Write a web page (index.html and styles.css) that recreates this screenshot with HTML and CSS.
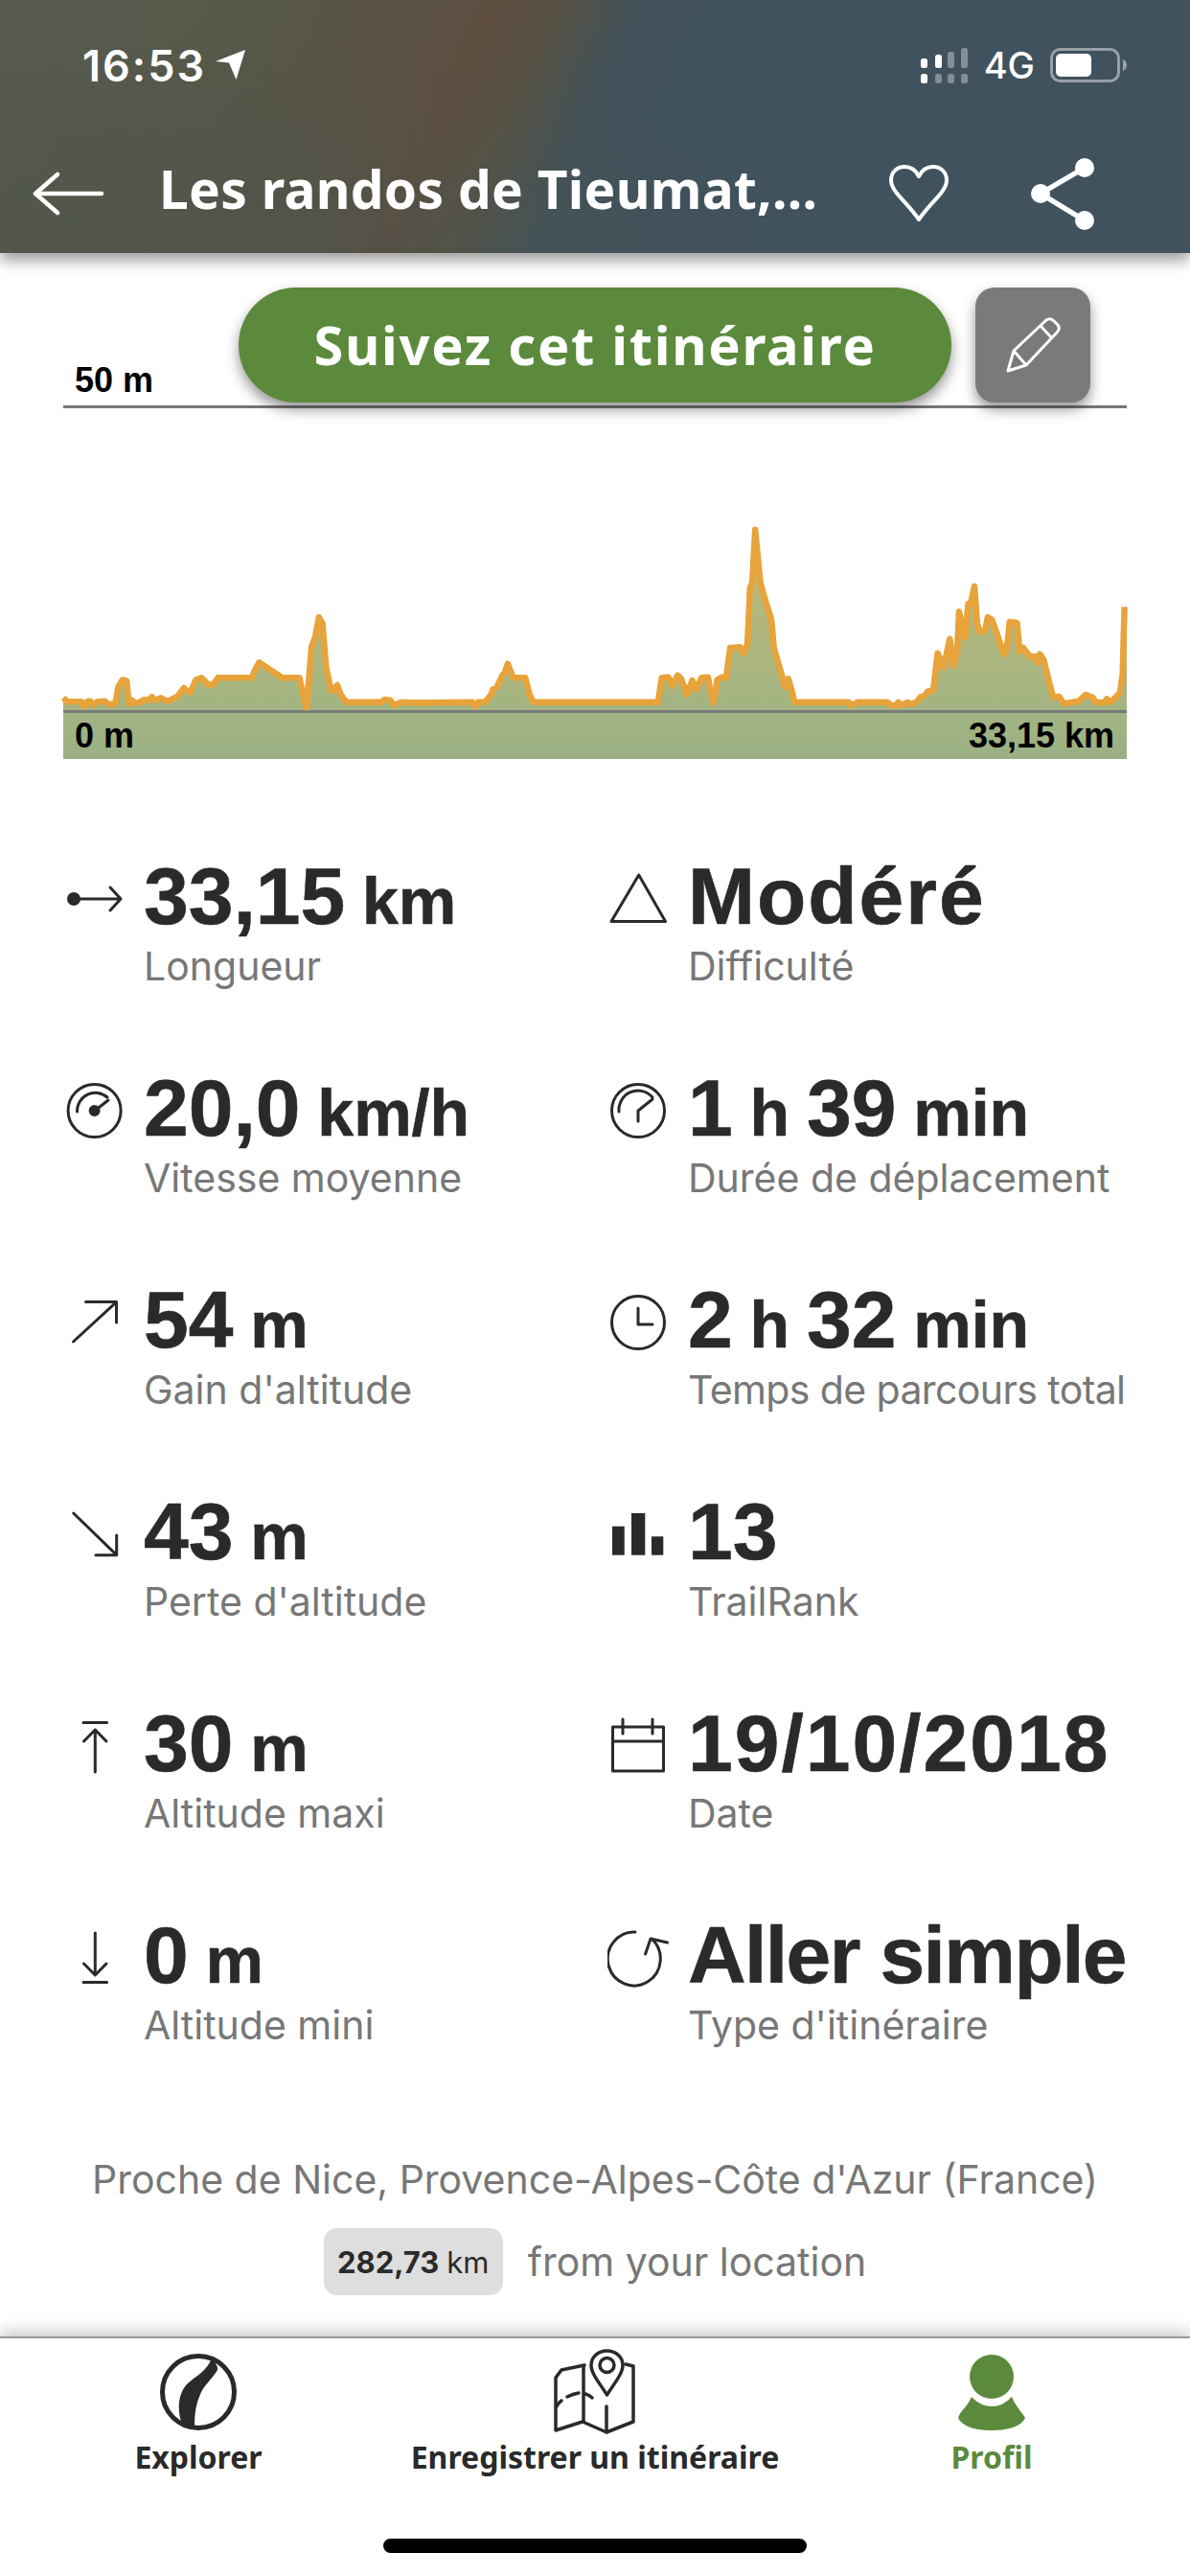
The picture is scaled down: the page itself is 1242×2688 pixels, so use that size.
FILE: index.html
```html
<!DOCTYPE html>
<html lang="fr">
<head>
    <meta charset="utf-8">
    <title>Les randos de Tieumat</title>
    <link rel="stylesheet" href="styles.css">
</head>
<body>
    <header class="topbar">
        <div class="status">
            <div class="status-time">
                <span>16:53</span>
                <svg class="status-loc" width="36" height="34" viewBox="0 0 36 34"><path d="M33 1 L2 13 L16 14.500 L23.500 32 Z" fill="#fff"/></svg>
            </div>
            <div class="status-right">
                <svg width="56" height="40" viewBox="0 0 56 40">
                    <g fill="#fff">
                        <rect x="2" y="13" width="7" height="10" rx="2.500"/>
                        <rect x="2" y="29" width="7" height="10" rx="2.500"/>
                        <rect x="17" y="9" width="7" height="14" rx="2.500"/>
                    </g>
                    <g fill="#fff" opacity=".35">
                        <rect x="30" y="6" width="7" height="17" rx="2.500"/>
                        <rect x="44" y="2" width="7" height="21" rx="2.500"/>
                        <rect x="17" y="29" width="7" height="10" rx="2.500"/>
                        <rect x="30" y="29" width="7" height="10" rx="2.500"/>
                        <rect x="44" y="29" width="7" height="10" rx="2.500"/>
                    </g>
                </svg>
                <span class="status-net">4G</span>
                <svg width="82" height="36" viewBox="0 0 82 36">
                    <rect x="1.500" y="1.500" width="70" height="33" rx="9" fill="none" stroke="#fff" stroke-opacity=".45" stroke-width="3"/>
                    <rect x="6" y="6" width="37" height="24" rx="5" fill="#fff"/>
                    <path d="M76 12 C79 13 80 15.500 80 18 C80 20.500 79 23 76 24 Z" fill="#fff" fill-opacity=".45"/>
                </svg>
            </div>
        </div>
        <div class="navrow">
            <svg class="nav-back" width="76" height="46" viewBox="0 0 76 46"><path d="M26 3 L3 23 L26 43 M3 23 H72" fill="none" stroke="#fff" stroke-width="4.500" stroke-linecap="round" stroke-linejoin="round"/></svg>
            <h1 class="nav-title">Les randos de Tieumat,...</h1>
            <svg class="nav-heart" width="64" height="62" viewBox="0 0 64 62"><path d="M32 58 C19 39 3 29 3 17 C3 8 10 3 17 3 C24 3 29 7 32 13 C35 7 40 3 47 3 C54 3 61 8 61 17 C61 29 45 39 32 58 Z" fill="none" stroke="#fff" stroke-width="4" stroke-linejoin="round"/></svg>
            <svg class="nav-share" width="70" height="78" viewBox="0 0 70 78"><path d="M57 12 L11 39 L57 67" fill="none" stroke="#fff" stroke-width="5.500"/><circle cx="57" cy="12" r="10" fill="#fff"/><circle cx="11" cy="39" r="10" fill="#fff"/><circle cx="57" cy="67" r="10" fill="#fff"/></svg>
        </div>
    </header>

    <main class="content">
        <section class="profile">
            <div class="profile-actions">
                <button class="follow-btn" type="button">Suivez cet itinéraire</button>
                <button class="edit-btn" type="button">
                    <svg width="120" height="120" viewBox="0 0 120 120"><path d="M34 87 L40 66 L74 34 Q78 31 82 35 L86 39 Q89 43 85 47 L53 81 Z M68 40 L80 53 M40 66 L53 81" fill="none" stroke="#fff" stroke-width="3" stroke-linejoin="round"/></svg>
                </button>
            </div>
            <div class="axis-top"><span>50 m</span></div>
            <svg class="profile-graph" width="1110" height="241" viewBox="0 0 1110 241">
                <defs>
                    <linearGradient id="areafill" gradientUnits="userSpaceOnUse" x1="0" y1="50" x2="0" y2="241">
                        <stop offset="0" stop-color="#c4b977"/>
                        <stop offset="1" stop-color="#a2b482"/>
                    </linearGradient>
                </defs>
                <path class="graph-area" d="M0 228 L4.600 232.300 L19.200 232.300 L21.800 237.300 L25.700 231.700 L28.300 231.700 L31.400 235.700 L35.200 232.300 L43.700 231.700 L46.700 235 L54.400 234.300 L57.400 216.700 L62 209.300 L66.200 210.700 L68.500 234.300 L71.600 230.700 L76.600 234.300 L85 230 L88.800 230.700 L92.600 227.300 L95.700 230.700 L102.200 228.300 L108.700 232 L119.400 226.700 L125.900 218 L128.200 220 L132.800 222.300 L138.600 209.300 L144.300 207.300 L152 215 L156.900 214 L161.500 207.300 L196.700 207.300 L199.800 200 L204.400 191.300 L228.500 207.300 L246.500 207.300 L251.500 230 L254.100 238.300 L259.100 175 L262.900 165 L266.800 144 L270.600 150.700 L274.400 196.700 L279.400 220 L282.500 220.700 L285.900 215 L289.700 225 L295.500 232.700 L331.800 232.700 L335.600 230 L341.400 230.700 L345.200 236 L352.900 232.700 L368.200 233.300 L427.500 232.700 L430.200 237.300 L433.200 232.700 L440.100 232.700 L446.600 225 L448.500 219.300 L452.400 217.300 L458.100 205 L460.800 201.700 L463.900 192.700 L469.600 207.300 L482.200 207.300 L486.800 225 L490.600 232.700 L620.800 232.700 L624.700 207.300 L631.600 206.700 L635.400 216 L641.200 204.700 L645 208.300 L650.800 225 L656.500 210 L660.400 220 L666.100 207.300 L673 206.700 L675.700 223.300 L678.800 233.300 L682.600 209.300 L687.300 206.700 L691.900 207.300 L696.100 176 L706.400 175.300 L710.300 181.700 L714.100 171.700 L716.800 113.300 L719.100 108.300 L722.200 52.700 L727.600 108.300 L733.300 128.300 L739.100 146.700 L741.800 176.700 L750.600 206.700 L753.300 217.300 L756.700 208.300 L760.200 220 L763.300 232.700 L819.700 232.700 L822.800 236 L829.300 232.700 L860 232.700 L863.800 236 L869.600 236 L871.500 232.700 L875.400 236 L881.100 232.700 L884.200 235 L890.700 232.700 L894.600 227.300 L898.400 226.700 L902.200 221.700 L908 220 L912.600 181.700 L918.700 196.700 L925.300 166.700 L929.100 195 L933 180 L934.900 138.300 L941.400 165 L944.500 130 L947.100 130 L951 111.700 L954 151.700 L957.100 160 L962.500 156.700 L964.800 144 L969.400 146.700 L975.200 163.300 L981.700 182.700 L984.800 176.700 L987.800 149 L995.500 150 L998.200 180 L1002 176 L1008.600 185 L1014.700 185 L1016.600 191.700 L1019.300 182.700 L1023.200 188.300 L1031.600 221.700 L1033.900 228.300 L1039.300 226.700 L1044.300 234.300 L1059.700 231.700 L1067.300 225 L1074.200 227.700 L1077.700 232.700 L1086.500 233.300 L1089.200 229.300 L1093.400 232.700 L1103 222.700 L1105.700 203.300 L1107.600 133.300 L1110 133.300 L1110 241 L0 241 Z"/>
                <path class="graph-line" d="M0 228 L4.600 232.300 L19.200 232.300 L21.800 237.300 L25.700 231.700 L28.300 231.700 L31.400 235.700 L35.200 232.300 L43.700 231.700 L46.700 235 L54.400 234.300 L57.400 216.700 L62 209.300 L66.200 210.700 L68.500 234.300 L71.600 230.700 L76.600 234.300 L85 230 L88.800 230.700 L92.600 227.300 L95.700 230.700 L102.200 228.300 L108.700 232 L119.400 226.700 L125.900 218 L128.200 220 L132.800 222.300 L138.600 209.300 L144.300 207.300 L152 215 L156.900 214 L161.500 207.300 L196.700 207.300 L199.800 200 L204.400 191.300 L228.500 207.300 L246.500 207.300 L251.500 230 L254.100 238.300 L259.100 175 L262.900 165 L266.800 144 L270.600 150.700 L274.400 196.700 L279.400 220 L282.500 220.700 L285.900 215 L289.700 225 L295.500 232.700 L331.800 232.700 L335.600 230 L341.400 230.700 L345.200 236 L352.900 232.700 L368.200 233.300 L427.500 232.700 L430.200 237.300 L433.200 232.700 L440.100 232.700 L446.600 225 L448.500 219.300 L452.400 217.300 L458.100 205 L460.800 201.700 L463.900 192.700 L469.600 207.300 L482.200 207.300 L486.800 225 L490.600 232.700 L620.800 232.700 L624.700 207.300 L631.600 206.700 L635.400 216 L641.200 204.700 L645 208.300 L650.800 225 L656.500 210 L660.400 220 L666.100 207.300 L673 206.700 L675.700 223.300 L678.800 233.300 L682.600 209.300 L687.300 206.700 L691.900 207.300 L696.100 176 L706.400 175.300 L710.300 181.700 L714.100 171.700 L716.800 113.300 L719.100 108.300 L722.200 52.700 L727.600 108.300 L733.300 128.300 L739.100 146.700 L741.800 176.700 L750.600 206.700 L753.300 217.300 L756.700 208.300 L760.200 220 L763.300 232.700 L819.700 232.700 L822.800 236 L829.300 232.700 L860 232.700 L863.800 236 L869.600 236 L871.500 232.700 L875.400 236 L881.100 232.700 L884.200 235 L890.700 232.700 L894.600 227.300 L898.400 226.700 L902.200 221.700 L908 220 L912.600 181.700 L918.700 196.700 L925.300 166.700 L929.100 195 L933 180 L934.900 138.300 L941.400 165 L944.500 130 L947.100 130 L951 111.700 L954 151.700 L957.100 160 L962.500 156.700 L964.800 144 L969.400 146.700 L975.200 163.300 L981.700 182.700 L984.800 176.700 L987.800 149 L995.500 150 L998.200 180 L1002 176 L1008.600 185 L1014.700 185 L1016.600 191.700 L1019.300 182.700 L1023.200 188.300 L1031.600 221.700 L1033.900 228.300 L1039.300 226.700 L1044.300 234.300 L1059.700 231.700 L1067.300 225 L1074.200 227.700 L1077.700 232.700 L1086.500 233.300 L1089.200 229.300 L1093.400 232.700 L1103 222.700 L1105.700 203.300 L1107.600 133.300"/>
            </svg>
            <div class="axis-bottom"><span>0 m</span><span>33,15 km</span></div>
        </section>

        <section class="stats">
            <div class="stat">
                <svg class="stat-icon" width="85" height="90" viewBox="0 0 85 90"><circle cx="11" cy="48" r="5.500" fill="#2a2a2a"/><path d="M11 48 H59 M49 36 L60 48 L49 60"/></svg>
                <div><div class="stat-value">33,15 <small>km</small></div><div class="stat-label">Longueur</div></div>
            </div>
            <div class="stat">
                <svg class="stat-icon" width="85" height="90" viewBox="0 0 85 90"><path d="M32.700 23 L4 71.500 H60.500 Z"/></svg>
                <div><div class="stat-value value-wide">Modéré</div><div class="stat-label">Difficulté</div></div>
            </div>
            <div class="stat">
                <svg class="stat-icon" width="85" height="90" viewBox="0 0 85 90"><circle cx="32.600" cy="48" r="27.500"/><path d="M14.500 49 A19 19 0 0 1 46 34 M33 48 L47 37"/><circle cx="32.600" cy="48" r="4.500" fill="#2a2a2a"/></svg>
                <div><div class="stat-value">20,0 <small>km/h</small></div><div class="stat-label">Vitesse moyenne</div></div>
            </div>
            <div class="stat">
                <svg class="stat-icon" width="85" height="90" viewBox="0 0 85 90"><circle cx="32" cy="48" r="27.500"/><path d="M12 49 A20 20 0 0 1 47 34 M32 59 V48 L47 36"/></svg>
                <div><div class="stat-value">1 <small>h</small> 39 <small>min</small></div><div class="stat-label">Durée de déplacement</div></div>
            </div>
            <div class="stat">
                <svg class="stat-icon" width="85" height="90" viewBox="0 0 85 90"><path d="M10.500 68 L55.500 26.600 M23.500 26.600 H55.500 V48"/></svg>
                <div><div class="stat-value">54 <small>m</small></div><div class="stat-label">Gain d'altitude</div></div>
            </div>
            <div class="stat">
                <svg class="stat-icon" width="85" height="90" viewBox="0 0 85 90"><circle cx="32" cy="48" r="27.500"/><path d="M32 33 V50 H47"/></svg>
                <div><div class="stat-value">2 <small>h</small> 32 <small>min</small></div><div class="stat-label label-tight">Temps de parcours total</div></div>
            </div>
            <div class="stat">
                <svg class="stat-icon" width="85" height="90" viewBox="0 0 85 90"><path d="M10.700 26 L55.700 69.700 M34 69.700 H55.700 V49"/></svg>
                <div><div class="stat-value">43 <small>m</small></div><div class="stat-label">Perte d'altitude</div></div>
            </div>
            <div class="stat">
                <svg class="stat-icon" width="85" height="90" viewBox="0 0 85 90"><g class="bars"><rect x="5" y="39.700" width="12.700" height="30"/><rect x="25" y="26" width="14.300" height="43.700"/><rect x="46" y="50.300" width="12.300" height="19.400"/></g></svg>
                <div><div class="stat-value">13</div><div class="stat-label">TrailRank</div></div>
            </div>
            <div class="stat">
                <svg class="stat-icon" width="85" height="90" viewBox="0 0 85 90"><path d="M33.300 75 V31 M21.500 43 L33.300 31 L45 43 M21 23.500 H45.600"/></svg>
                <div><div class="stat-value">30 <small>m</small></div><div class="stat-label">Altitude maxi</div></div>
            </div>
            <div class="stat">
                <svg class="stat-icon" width="85" height="90" viewBox="0 0 85 90"><rect x="5.500" y="28" width="53" height="46" /><path d="M5.500 43 H58.500 M16 20 V35 M47 20 V35"/></svg>
                <div><div class="stat-value value-wide">19/10/2018</div><div class="stat-label">Date</div></div>
            </div>
            <div class="stat">
                <svg class="stat-icon" width="85" height="90" viewBox="0 0 85 90"><path d="M33.300 22 V66 M21.500 54 L33.300 66 L45 54 M21 73.500 H45.600"/></svg>
                <div><div class="stat-value">0 <small>m</small></div><div class="stat-label">Altitude mini</div></div>
            </div>
            <div class="stat">
                <svg class="stat-icon" width="85" height="90" viewBox="0 0 85 90"><path d="M29 21 A27.500 28 0 1 0 46 28 M39.600 44 L45 28 L62.500 32"/></svg>
                <div><div class="stat-value value-tight">Aller simple</div><div class="stat-label">Type d'itinéraire</div></div>
            </div>
        </section>

        <section class="location">
            <p class="location-name">Proche de Nice, Provence-Alpes-Côte d'Azur (France)</p>
            <div class="location-dist">
                <span class="dist-pill"><b>282,73</b> km</span>
                <span>from your location</span>
            </div>
        </section>
    </main>

    <nav class="tabs">
        <div class="tab-row">
            <div class="tab">
                <svg width="90" height="90" viewBox="0 0 90 90">
                    <circle cx="45" cy="45" r="37.500" fill="none" stroke="#2a2a2a" stroke-width="5"/>
                    <path d="M59 9 C62 14 66 18 65 22 C60 31 50 38 46 50 C42 60 41 70 41 82 C35 82 30 80 27 76 C23 62 24 48 32 38 C42 28 54 24 59 9 Z" fill="#2a2a2a"/>
                </svg>
                <span>Explorer</span>
            </div>
            <div class="tab">
                <svg width="90" height="90" viewBox="0 0 90 90">
                    <g fill="none" stroke="#2a2a2a" stroke-width="3.500" stroke-linejoin="round" stroke-linecap="round">
                        <path d="M34 17 L10 22 L4 30 V85 L32 76 L57 87 L85 76 V18 L77 16"/>
                        <path d="M33 18 V76 M57 60 V87"/>
                        <path d="M57.500 48 C50 36 41 26 41 17 C41 8 49 2 57.500 2 C66 2 74 8 74 17 C74 26 65 36 57.500 48 Z"/>
                        <circle cx="57.500" cy="17" r="7.500"/>
                        <path d="M5 60 Q7 56 10 54 M16 50 Q22 47 28 46 M35 47 Q39 48 42 51" />
                    </g>
                </svg>
                <span>Enregistrer un itinéraire</span>
            </div>
            <div class="tab tab-active">
                <svg width="90" height="90" viewBox="0 0 90 90">
                    <circle cx="45" cy="29" r="23" fill="#5b8a3c"/>
                    <path d="M24 50 Q33 60 45 60 Q57 60 66 50 C70 60 78 68 80 72 C75 82 60 85 45 85 C30 85 15 82 10 72 C12 65 20 60 24 50 Z" fill="#5b8a3c"/>
                </svg>
                <span>Profil</span>
            </div>
        </div>
        <div class="home-bar"></div>
    </nav>
</body>
</html>
```

FILE: styles.css
```css
html, body{
    margin:0;
    padding:0;
}
body{
    width:1242px;
    height:2688px;
    overflow:hidden;
    display:flex;
    flex-direction:column;
    background-color:#ffffff;
    font-family:"Inter", "Liberation Sans", sans-serif;
}

/* top bar */
.topbar{
    height:264px;
    flex:none;
    position:relative;
    z-index:2;
    color:#ffffff;
    background:
        radial-gradient(ellipse 620px 230px at 200px 264px, rgba(78,84,76,0.75), rgba(78,84,76,0) 100%),
        linear-gradient(115deg, #565a4e 0px, #575849 250px, #5a5244 400px, #5e4d3f 470px, #565144 530px, #42525a 610px, #40525d 680px, #40525d 100%);
    box-shadow:0 8px 14px rgba(0,0,0,0.38);
}
.status{
    height:136px;
    display:flex;
    align-items:center;
    justify-content:space-between;
    padding:0 64px 0 86px;
}
.status-time{
    display:flex;
    align-items:center;
    gap:8px;
    font-size:45px;
    font-weight:600;
    letter-spacing:2px;
}
.status-right{
    display:flex;
    align-items:center;
    gap:12px;
}
.status-net{
    font-size:38px;
    font-weight:500;
    margin:0 4px 0 0;
}
.navrow{
    height:124px;
    padding:4px 0 0 34px;
    display:flex;
    align-items:center;
}
.nav-title{
    margin:0 0 12px 56px;
    width:693px;
    font-family:"Noto Sans", sans-serif;
    font-size:55px;
    font-weight:700;
    letter-spacing:0.3px;
    white-space:nowrap;
}
.nav-heart{
    margin-left:68px;
}
.nav-share{
    margin-left:84px;
}

/* elevation profile */
.content{
    flex:1;
}
.profile{
    position:relative;
    padding:0 66px;
}
.axis-top{
    height:159px;
    display:flex;
    align-items:flex-end;
    border-bottom:3px solid #777777;
    font-family:"Liberation Sans", sans-serif;
    font-size:36px;
    font-weight:700;
    color:#000000;
}
.axis-top span{
    padding:0 0 5px 12px;
}
.profile-actions{
    position:absolute;
    top:36px;
    left:249px;
    display:flex;
    gap:25px;
    z-index:1;
}
.follow-btn{
    width:744px;
    height:120px;
    padding:0 0 3px;
    border:none;
    border-radius:60px;
    background-color:#5b8a3c;
    color:#ffffff;
    font-family:"Noto Sans", sans-serif;
    font-size:56px;
    font-weight:700;
    letter-spacing:1.7px;
    box-shadow:0 7px 14px rgba(0,0,0,0.42);
}
.edit-btn{
    width:120px;
    height:120px;
    padding:0;
    border:none;
    border-radius:20px;
    background-color:#7a7a7a;
    box-shadow:0 7px 14px rgba(0,0,0,0.42);
}
.edit-btn svg{
    display:block;
}
.profile-graph{
    display:block;
    margin-top:74px;
    overflow:visible;
}
.graph-area{
    fill:url(#areafill);
}
.graph-line{
    fill:none;
    stroke:#e8a33a;
    stroke-width:6.5;
    stroke-linejoin:round;
}
.axis-bottom{
    height:48px;
    display:flex;
    justify-content:space-between;
    align-items:center;
    padding:0 13px 0 12px;
    border-top:3px solid #7a7a7a;
    background:linear-gradient(180deg, #a2b482, #9ab084);
    font-family:"Liberation Sans", sans-serif;
    font-size:36px;
    font-weight:700;
    color:#000000;
}

/* stats grid */
.stats{
    margin-top:98px;
    padding-left:66px;
    display:grid;
    grid-template-columns:568px 1fr;
    grid-auto-rows:221px;
}
.stat{
    display:flex;
}
.stat-icon{
    flex:none;
    margin-right:-1px;
    fill:none;
    stroke:#2a2a2a;
    stroke-width:3;
    stroke-linecap:round;
    stroke-linejoin:round;
}
.bars{
    fill:#2a2a2a;
    stroke:none;
}
.stat-value{
    height:90px;
    line-height:90px;
    font-family:"Liberation Sans", sans-serif;
    font-size:84px;
    font-weight:700;
    word-spacing:-5.5px;
    color:#2a2a2a;
    -webkit-text-stroke:0.6px #2a2a2a;
    white-space:nowrap;
}
.stat-value small{
    font-size:68px;
}
.value-wide{
    letter-spacing:2px;
}
.value-tight{
    letter-spacing:-1.6px;
    word-spacing:0;
}
.stat-label{
    margin-top:4px;
    line-height:48px;
    font-size:41px;
    color:#777777;
    white-space:nowrap;
}
.label-tight{
    letter-spacing:-0.6px;
}

/* location */
.location{
    margin-top:34px;
    font-size:41px;
    color:#777777;
    text-align:center;
}
.location-name{
    margin:0;
    line-height:48px;
}
.location-dist{
    margin-top:27px;
    display:flex;
    justify-content:center;
    align-items:center;
    gap:26px;
}
.dist-pill{
    width:187px;
    height:70px;
    display:flex;
    align-items:center;
    justify-content:center;
    gap:8px;
    border-radius:14px;
    background-color:#dedede;
    font-size:31px;
    color:#2a2a2a;
}

/* tab bar */
.tabs{
    flex:none;
    height:248px;
    position:relative;
    z-index:2;
    background-color:#ffffff;
    border-top:2px solid #999999;
    box-shadow:0 -6px 14px rgba(0,0,0,0.2);
}
.tab-row{
    display:grid;
    grid-template-columns:repeat(3, 414px);
    padding-top:11px;
}
.tab{
    display:flex;
    flex-direction:column;
    align-items:center;
    font-family:"Noto Sans", sans-serif;
    font-size:32px;
    font-weight:700;
    line-height:40px;
    color:#2a2a2a;
}
.tab svg{
    display:block;
    margin-bottom:3px;
}
.tab-active{
    color:#5b8a3c;
}
.home-bar{
    width:442px;
    height:15px;
    margin:65px auto 0;
    border-radius:8px;
    background-color:#000000;
}
```
